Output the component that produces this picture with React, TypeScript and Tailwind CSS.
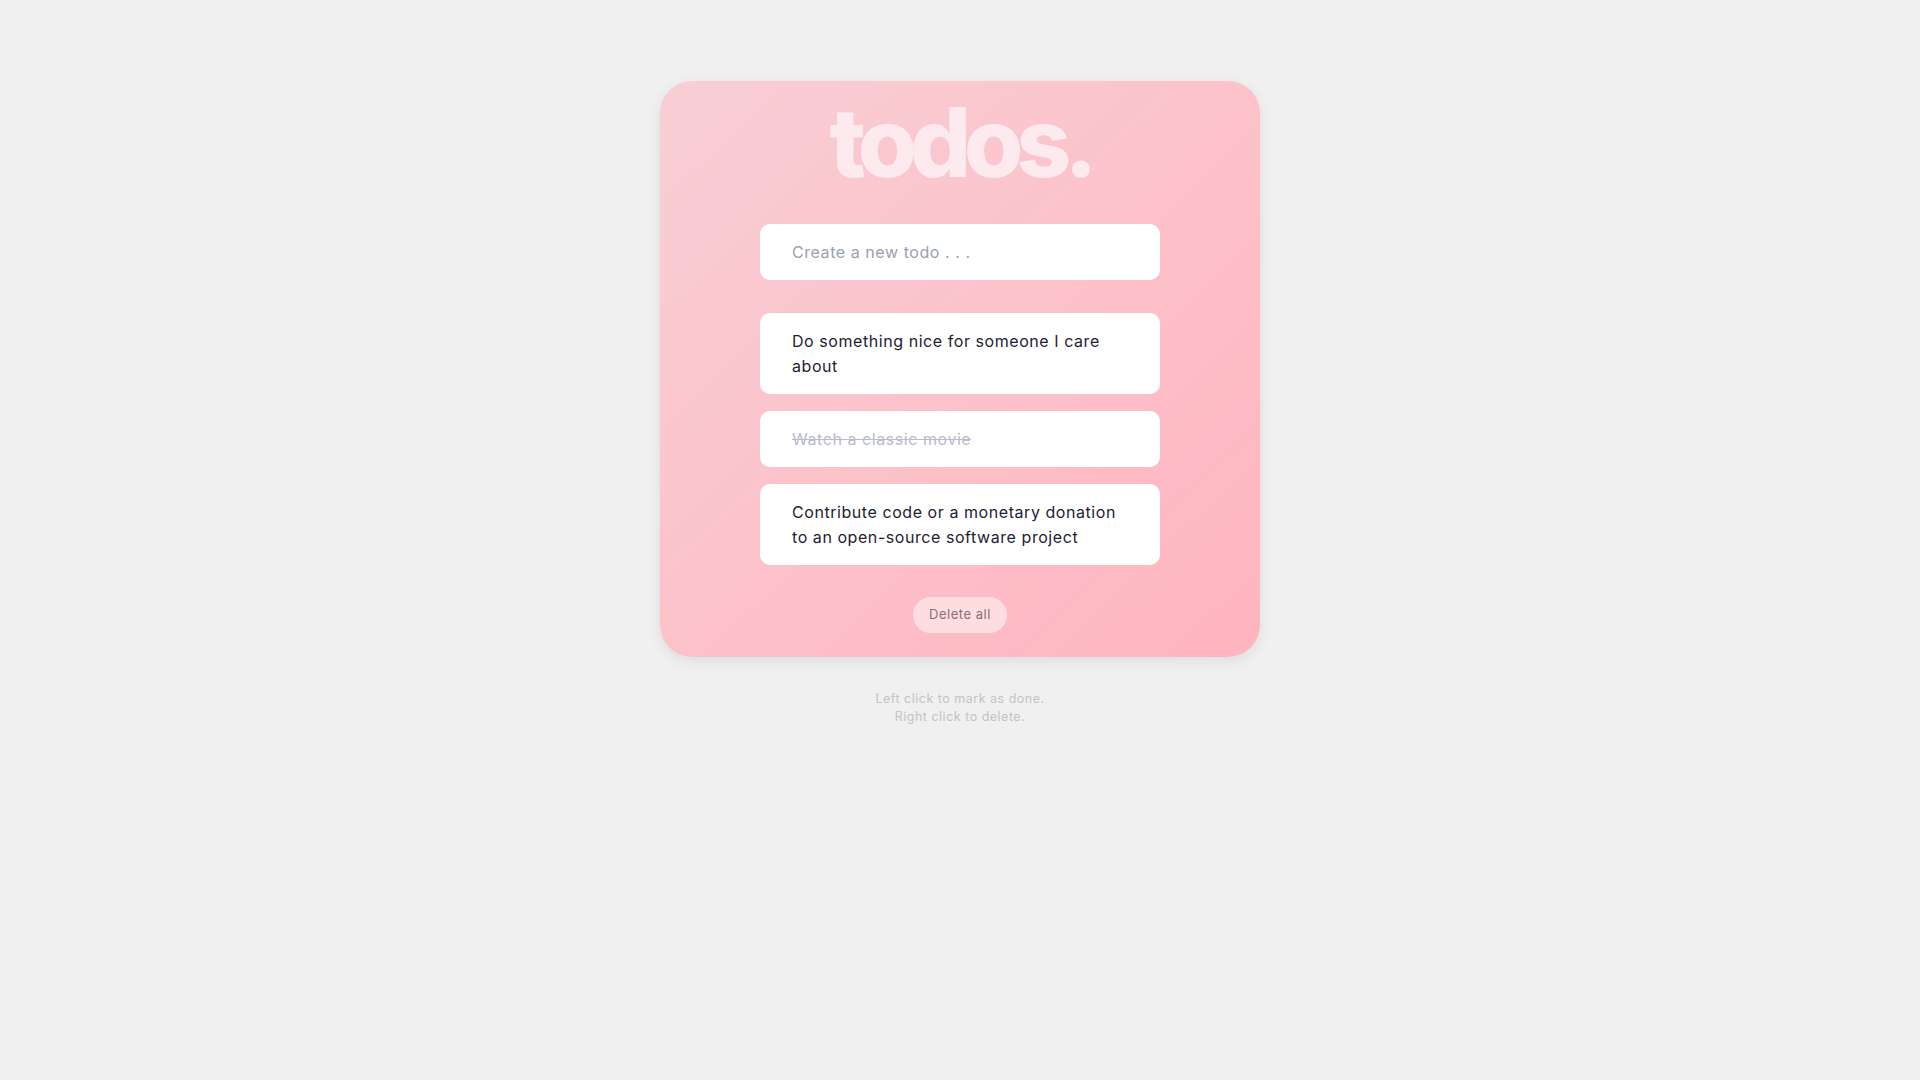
import React, { useState } from "react";

type Todo = { id: number; text: string; done: boolean };

const inicial: Todo[] = [
  { id: 1, text: "Do something nice for someone I care about", done: false },
  { id: 2, text: "Watch a classic movie", done: true },
  { id: 3, text: "Contribute code or a monetary donation to an open-source software project", done: false },
];

const App: React.FC = () => {
  const [todos, setTodos] = useState<Todo[]>(inicial);
  const [novo, setNovo] = useState("");

  const alternar = (id: number) =>
    setTodos(todos.map((t) => (t.id === id ? { ...t, done: !t.done } : t)));

  return (
    <div className="min-h-screen bg-[#f0f0f0] pt-[81px] font-['Inter',sans-serif]">
      <div className="mx-auto w-[600px] rounded-[32px] bg-gradient-to-br from-[#f8cfd5] to-[#ffb4bf] px-[100px] pt-[13px] pb-[24px] shadow-[0_4px_14px_rgba(0,0,0,0.08)]">
        <h1 className="text-center text-[96px] leading-none font-extrabold tracking-[-0.075em] text-[#fdeaee]">
          todos.
        </h1>

        <form
          className="mt-[34px]"
          onSubmit={(e) => {
            e.preventDefault();
            if (!novo.trim()) return;
            setTodos([...todos, { id: Date.now(), text: novo, done: false }]);
            setNovo("");
          }}
        >
          <input
            value={novo}
            onChange={(e) => setNovo(e.target.value)}
            placeholder="Create a new todo . . ."
            className="h-[56px] w-full rounded-[10px] bg-white px-8 text-[16px] tracking-[0.035em] text-[#222a3a] outline-none placeholder:text-[#9a9fb0]"
          />
        </form>

        <ul className="mt-[33px] space-y-[17px]">
          {todos.map((t) => (
            <li
              key={t.id}
              onClick={() => alternar(t.id)}
              onContextMenu={(e) => {
                e.preventDefault();
                setTodos(todos.filter((x) => x.id !== t.id));
              }}
              className={
                "cursor-pointer rounded-[10px] bg-white px-8 py-[15.5px] text-[16px] leading-[25px] tracking-[0.035em] " +
                (t.done ? "text-[#b9bccb] line-through" : "text-[#1e2233]")
              }
            >
              {t.text}
            </li>
          ))}
        </ul>

        <div className="mt-[32px] flex justify-center">
          <button
            onClick={() => setTodos([])}
            className="h-[36px] rounded-full bg-[#fedde1] px-4 text-[13px] tracking-[0.04em] text-[#8e6d76]"
          >
            Delete all
          </button>
        </div>
      </div>

      <p className="mt-[33px] text-center text-[12.5px] leading-[18px] tracking-[0.04em] text-[#c3c3c3]">
        Left click to mark as done.
        <br />
        Right click to delete.
      </p>
    </div>
  );
};

export default App;
